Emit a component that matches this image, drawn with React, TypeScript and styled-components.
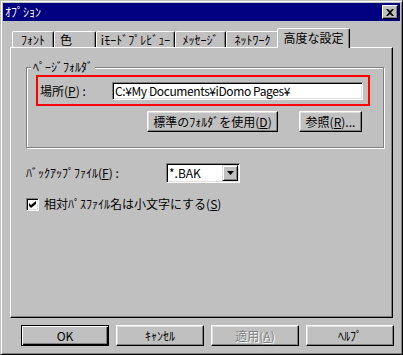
import React from "react";
import styled, { createGlobalStyle } from "styled-components";

const Global = createGlobalStyle`
  html, body { margin: 0; padding: 0; background: #c0c0c0; }
  body {
    font-family: "Noto Sans CJK JP", "Noto Sans", "Liberation Sans", sans-serif;
    font-size: 12px;
  }
  * { box-sizing: border-box; }
`;

const FONT = `"Noto Sans CJK JP", "Noto Sans", "Liberation Sans", sans-serif`;

const Window = styled.div`
  width: 403px;
  height: 355px;
  background: #c0c0c0;
  border: 1px solid;
  border-color: #c0c0c0 #000 #000 #c0c0c0;
  box-shadow: inset 1px 1px #fff, inset -1px -1px #808080;
  padding: 2px;
  display: flex;
  flex-direction: column;
  font-family: ${FONT};
  font-size: 12px;
  line-height: 14px;
  color: #000;
`;

const TitleBar = styled.div`
  height: 18px;
  background: #000080;
  color: #fff;
  display: flex;
  align-items: center;
  justify-content: space-between;
  padding: 0 2px 0 2px;
`;

const TitleText = styled.span`
  color: #fff;
  font-size: 12px;
`;

const CloseButton = styled.div`
  width: 16px;
  height: 14px;
  background: #c0c0c0;
  border: 1px solid;
  border-color: #fff #000 #000 #fff;
  box-shadow: inset -1px -1px #808080;
  display: flex;
  align-items: center;
  justify-content: center;
`;

const Body = styled.div`
  flex: 1;
  display: flex;
  flex-direction: column;
  padding: 7px 7px 0 7px;
`;

const TabStrip = styled.div`
  height: 19px;
  display: flex;
  align-items: flex-end;
  padding-left: 2px;
`;

const Tab = styled.div<{ $w: number; $active?: boolean; $left?: boolean }>`
  position: relative;
  z-index: ${(p) => (p.$active ? 3 : 1)};
  width: ${(p) => p.$w + (p.$active ? 4 : 0)}px;
  height: ${(p) => (p.$active ? 20 : 16)}px;
  margin: ${(p) => (p.$active ? "0 -2px -1px -2px" : "0")};
  background: #c0c0c0;
  border: 1px solid;
  border-bottom: none;
  border-color: #fff #000 transparent #fff;
  border-radius: 2px 2px 0 0;
  box-shadow: inset -1px 0 #808080;
  display: flex;
  align-items: center;
  justify-content: ${(p) => (p.$left ? "flex-start" : "center")};
  padding: ${(p) => (p.$left ? "0 0 0 5px" : "0")};
  padding-bottom: ${(p) => (p.$active ? 1 : 0)}px;
  white-space: nowrap;
  font-size: 12px;
`;

const Panel = styled.div`
  position: relative;
  z-index: 2;
  height: 271px;
  border: 1px solid;
  border-color: #fff #000 #000 #fff;
  box-shadow: inset -1px -1px #808080;
  padding: 19px 8px 0 15px;
  display: flex;
  flex-direction: column;
`;

const GroupBox = styled.div`
  position: relative;
  border: 1px solid #808080;
  box-shadow: inset 1px 1px #fff, 1px 1px #fff;
  padding: 7px 13px 15px 9px;
  display: flex;
  flex-direction: column;
`;

const Legend = styled.span`
  position: absolute;
  top: -8px;
  left: 4px;
  padding: 0 2px;
  background: #c0c0c0;
  white-space: nowrap;
`;

const Highlight = styled.div`
  height: 31px;
  border: 2px solid #ff0000;
  display: flex;
  align-items: center;
  justify-content: space-between;
  padding: 0 5px 0 2px;
`;

const Label = styled.span<{ $w?: number }>`
  white-space: nowrap;
  width: ${(p) => (p.$w ? `${p.$w}px` : "auto")};
  flex: none;
`;

const U = styled.span`
  text-decoration: underline;
  text-underline-offset: 1px;
`;

const TextField = styled.input`
  width: 251px;
  height: 18px;
  border: 1px solid;
  border-color: #808080 #fff #fff #808080;
  box-shadow: inset 1px 1px #000, inset -1px -1px #dfdfdf;
  background: #fff;
  padding: 0 0 0 2px;
  margin: 0;
  font-family: ${FONT};
  font-size: 12px;
  letter-spacing: -0.4px;
  color: #000;
  outline: none;
`;

const GroupButtons = styled.div`
  margin-top: 5px;
  padding-right: 8px;
  display: flex;
  justify-content: flex-end;
  gap: 21px;
`;

const Button = styled.div<{ $w: number; $default?: boolean; $disabled?: boolean }>`
  width: ${(p) => p.$w}px;
  height: 21px;
  flex: none;
  background: #c0c0c0;
  border: 1px solid;
  border-color: ${(p) => (p.$default ? "#000" : "#fff #000 #000 #fff")};
  box-shadow: ${(p) =>
    p.$default
      ? "inset 1px 1px #fff, inset -1px -1px #000, inset -2px -2px #808080"
      : "inset -1px -1px #808080, inset 1px 1px #dfdfdf"};
  display: flex;
  align-items: center;
  justify-content: center;
  white-space: nowrap;
  color: ${(p) => (p.$disabled ? "#808080" : "#000")};
  text-shadow: ${(p) => (p.$disabled ? "1px 1px #fff" : "none")};
`;

const FieldRow = styled.div<{ $mt: number }>`
  margin-top: ${(p) => p.$mt}px;
  display: flex;
  align-items: center;
`;

const Combo = styled.div`
  width: 74px;
  height: 20px;
  border: 1px solid;
  border-color: #808080 #fff #fff #808080;
  box-shadow: inset 1px 1px #000, inset -1px -1px #dfdfdf;
  background: #fff;
  padding: 1px;
  display: flex;
  align-items: stretch;
`;

const ComboText = styled.span`
  flex: 1;
  display: flex;
  align-items: center;
  padding-left: 1px;
`;

const DropButton = styled.div`
  width: 16px;
  background: #c0c0c0;
  border: 1px solid;
  border-color: #dfdfdf #000 #000 #dfdfdf;
  box-shadow: inset 1px 1px #fff, inset -1px -1px #808080;
  display: flex;
  align-items: center;
  justify-content: center;
`;

const CheckBox = styled.div`
  width: 13px;
  height: 13px;
  flex: none;
  border: 1px solid;
  border-color: #808080 #fff #fff #808080;
  box-shadow: inset 1px 1px #000, inset -1px -1px #dfdfdf;
  background: #fff;
  display: flex;
  align-items: center;
  justify-content: center;
  margin-right: 5px;
`;

const DialogButtons = styled.div`
  margin-top: 7px;
  margin-right: -1px;
  display: flex;
  justify-content: flex-end;
  gap: 7px;
`;

const tabs = [
  { label: "ﾌｫﾝﾄ", w: 42 },
  { label: "色", w: 42, left: true },
  { label: "iﾓｰﾄﾞﾌﾟﾚﾋﾞｭｰ", w: 79 },
  { label: "ﾒｯｾｰｼﾞ", w: 51 },
  { label: "ﾈｯﾄﾜｰｸ", w: 53 },
  { label: "高度な設定", w: 69, active: true },
];

export default function App() {
  return (
    <>
      <Global />
      <Window>
        <TitleBar>
          <TitleText>ｵﾌﾟｼｮﾝ</TitleText>
          <CloseButton>
            <svg width="8" height="7" viewBox="0 0 8 7">
              <path d="M0 0h2l2 2 2-2h2L5 3.5 8 7H6L4 5 2 7H0l3-3.5z" fill="#000" />
            </svg>
          </CloseButton>
        </TitleBar>
        <Body>
          <TabStrip>
            {tabs.map((t) => (
              <Tab key={t.label} $w={t.w} $active={t.active} $left={t.left}>
                {t.label}
              </Tab>
            ))}
          </TabStrip>
          <Panel>
            <GroupBox>
              <Legend>ﾍﾟｰｼﾞﾌｫﾙﾀﾞ</Legend>
              <Highlight>
                <Label>
                  場所(<U>P</U>) :
                </Label>
                <TextField readOnly value="C:¥My Documents¥iDomo Pages¥" />
              </Highlight>
              <GroupButtons>
                <Button $w={131}>
                  標準のﾌｫﾙﾀﾞを使用(<U>D</U>)
                </Button>
                <Button $w={63}>
                  参照(<U>R</U>)...
                </Button>
              </GroupButtons>
            </GroupBox>
            <FieldRow $mt={15}>
              <Label $w={140}>
                ﾊﾞｯｸｱｯﾌﾟﾌｧｲﾙ(<U>F</U>) :
              </Label>
              <Combo>
                <ComboText>*.BAK</ComboText>
                <DropButton>
                  <svg width="7" height="4" viewBox="0 0 7 4">
                    <path d="M0 0h7L3.5 4z" fill="#000" />
                  </svg>
                </DropButton>
              </Combo>
            </FieldRow>
            <FieldRow $mt={14}>
              <CheckBox>
                <svg width="7" height="7" viewBox="0 0 7 7">
                  <path d="M0 2l2 2 5-4v3L2 7 0 5z" fill="#000" />
                </svg>
              </CheckBox>
              <Label>
                相対ﾊﾟｽﾌｧｲﾙ名は小文字にする(<U>S</U>)
              </Label>
            </FieldRow>
          </Panel>
          <DialogButtons>
            <Button $w={88} $default>
              OK
            </Button>
            <Button $w={88}>ｷｬﾝｾﾙ</Button>
            <Button $w={88} $disabled>
              適用(<U>A</U>)
            </Button>
            <Button $w={88}>ﾍﾙﾌﾟ</Button>
          </DialogButtons>
        </Body>
      </Window>
    </>
  );
}
